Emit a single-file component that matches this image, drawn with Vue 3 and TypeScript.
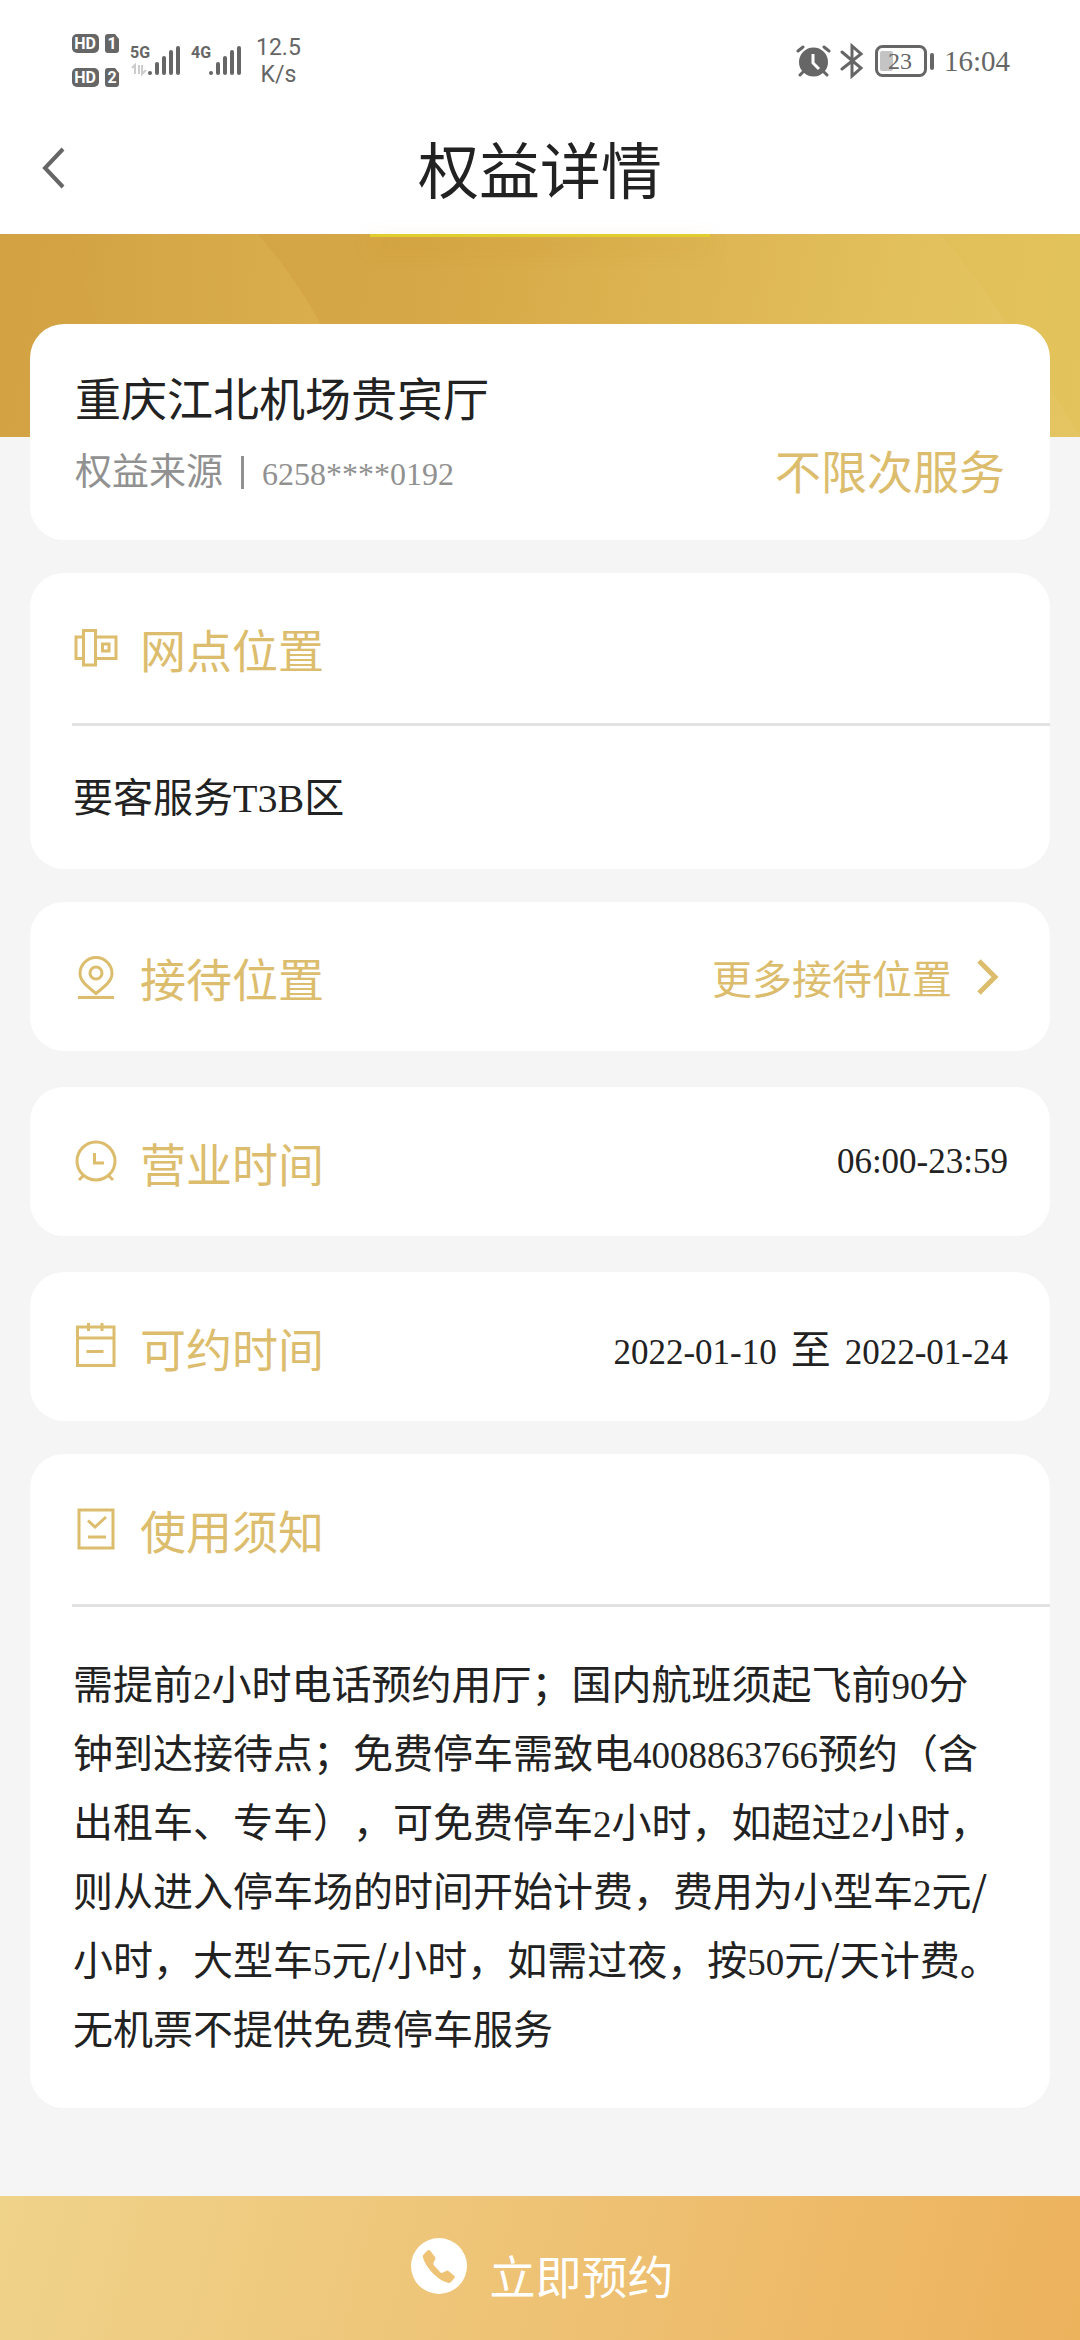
<script setup lang="ts">
type IconName = 'pin' | 'clock' | 'calendar'

interface InfoRow {
  icon: IconName
  title: string
  values?: string[]
  link?: string
}

const rows: InfoRow[] = [
  { icon: 'pin', title: '接待位置', link: '更多接待位置' },
  { icon: 'clock', title: '营业时间', values: ['06:00-23:59'] },
  { icon: 'calendar', title: '可约时间', values: ['2022-01-10', '至', '2022-01-24'] },
]

const signals = [
  { label: '5G', x: 60 },
  { label: '4G', x: 121 },
]
const bars = [
  { dx: 25, top: 30 },
  { dx: 32, top: 24 },
  { dx: 39, top: 18 },
  { dx: 46, top: 14 },
]

const notice =
  '需提前2小时电话预约用厅；国内航班须起飞前90分钟到达接待点；免费停车需致电4008863766预约（含出租车、专车），可免费停车2小时，如超过2小时，则从进入停车场的时间开始计费，费用为小型车2元/小时，大型车5元/小时，如需过夜，按50元/天计费。无机票不提供免费停车服务'

const isNumeric = (text: string) => /^[\d:-]+$/.test(text)

// Figures are set in their own face, so the notice is split around them.
const noticeParts = notice.split(/(\d+)/)
</script>

<template>
  <div class="page">
    <div class="status">
      <div class="status-group">
        <svg class="network" width="172" height="56" viewBox="0 0 172 56">
          <g v-for="n in 2" :key="n">
            <rect x="0" :y="n * 34 - 33" width="27" height="19" rx="5" />
            <text class="badge" x="13" :y="n * 34 - 18" text-anchor="middle">HD</text>
            <path :d="`M36 ${n * 34 - 33}h7l4 5v11q0 3-3 3h-8q-3 0-3-3v-13q0-3 3-3z`" />
            <text class="badge" x="40" :y="n * 34 - 18" text-anchor="middle">{{ n }}</text>
          </g>
          <g v-for="s in signals" :key="s.label">
            <text class="net" :x="s.x - 2" y="25">{{ s.label }}</text>
            <circle :cx="s.x + 18" cy="40" r="2" />
            <path
              v-for="b in bars"
              :key="b.dx"
              class="bar"
              :d="`M${s.x + b.dx} ${b.top + 1}V40`"
            />
          </g>
          <path class="arrows" d="M60 35l3-3v9M67 32v9M70 32v9l4-4" />
        </svg>
        <div class="speed"><span>12.5</span><span>K/s</span></div>
      </div>
      <div class="status-group right">
        <svg width="140" height="36" viewBox="0 0 140 36">
          <circle cx="17.5" cy="19" r="14.5" />
          <path class="line" d="M2 8l5-4M28 4l5 4M7 29l-3 3M28 29l3 3" />
          <path class="hand" d="M17 11v9l6 6" />
          <path class="line" d="M46 9l19 16-9 8V3l9 8-19 15" />
          <rect class="shell" x="80.500" y="3.500" width="49" height="29" rx="6" />
          <rect class="charge" x="84" y="8" width="13" height="20" rx="2" />
          <text class="level" x="104" y="26" text-anchor="middle">23</text>
          <rect x="134" y="10" width="4" height="17" rx="2" />
        </svg>
        <span class="time">16:04</span>
      </div>
    </div>

    <header class="nav">
      <button class="back" type="button" aria-label="返回">
        <svg width="26" height="42" viewBox="0 0 26 42">
          <path d="M22 2L4 21l18 19" />
        </svg>
      </button>
      <h1>权益详情</h1>
      <i class="progress"></i>
    </header>

    <div class="banner">
      <svg viewBox="0 0 1080 203" preserveAspectRatio="none">
        <defs>
          <linearGradient id="facet" x1="0" x2="1">
            <stop offset="0" stop-color="#e4c25c" stop-opacity="0" />
            <stop offset="1" stop-color="#e4c25c" stop-opacity=".3" />
          </linearGradient>
          <linearGradient id="edge" x1="0" x2="1">
            <stop offset="0" stop-color="#fff" stop-opacity="0" />
            <stop offset="1" stop-color="#fff" stop-opacity=".04" />
          </linearGradient>
        </defs>
        <path d="M70 0H258Q300 50 320 90L340 203H150Q90 90 70 0z" fill="url(#facet)" />
        <path d="M500 0H940Q1000 70 1080 203H560z" fill="url(#edge)" />
      </svg>
    </div>

    <main class="cards">
      <section class="card summary">
        <h2>重庆江北机场贵宾厅</h2>
        <div class="source">
          <span class="origin">权益来源<i class="divider"></i><span class="num">6258****0192</span></span>
          <strong>不限次服务</strong>
        </div>
      </section>

      <section class="card">
        <div class="head">
          <svg class="icon" viewBox="0 0 44 44">
            <path d="M9.500 4.500h12v34.500h-12zM9.500 11H2v21.500h7.500M21.500 11h20.500v21.500H21.500M28.500 18h6.500v7h-6.500z" />
          </svg>
          <h3>网点位置</h3>
        </div>
        <p class="body place">要客服务<span class="latin">T3B</span>区</p>
      </section>

      <div class="rows">
        <section v-for="row in rows" :key="row.title" class="card row">
          <svg class="icon" viewBox="0 0 44 44">
            <template v-if="row.icon === 'pin'">
              <path d="M22 38.500C16 33.500 6 27 6 18.500a16 16 0 0 1 32 0C38 27 28 33.500 22 38.500zM4 42.500h36" />
              <circle cx="22" cy="18" r="6" />
            </template>
            <template v-else-if="row.icon === 'clock'">
              <circle cx="22" cy="21" r="19" />
              <path d="M20.500 13v10H30M9 36l-4 4M35 36l4 4" />
            </template>
            <path v-else d="M3.500 2h36.500v38.500h-36.500zM3.500 13H40M14.500-2v8M28-2v8M12.500 26.500h17" />
          </svg>
          <h3>{{ row.title }}</h3>
          <a v-if="row.link" class="more" href="#">
            {{ row.link }}
            <svg width="24" height="36" viewBox="0 0 24 36"><path d="M3 2l16 16L3 34" /></svg>
          </a>
          <div v-else class="value">
            <span v-for="v in row.values" :key="v" :class="{ num: isNumeric(v) }">{{ v }}</span>
          </div>
        </section>
      </div>

      <section class="card">
        <div class="head">
          <svg class="icon" viewBox="0 0 44 44">
            <path d="M5 3h34v38H5zM14 13.500l7 6.500 11-10M14 30h18" />
          </svg>
          <h3>使用须知</h3>
        </div>
        <p class="body rules">
          <template v-for="(part, i) in noticeParts" :key="i"
            ><span v-if="isNumeric(part)" class="num">{{ part }}</span
            ><template v-else>{{ part }}</template></template
          >
        </p>
      </section>
    </main>

    <button class="book" type="button">
      <svg width="56" height="56" viewBox="0 0 56 56">
        <circle cx="28" cy="28" r="28" fill="#fff" />
        <path
          d="M12.500 16.500l4-4q1.500-1 2.500 0l5 6.500q1 1.500 0 3l-1.500 2.500q-.5 1.500.5 3l6 6.500q1.500 1.500 3 .5l3-1.500q1-1 2.500 0l5.500 4.500q1.500 1 .5 2.500l-3.500 4q-1.500 1.500-4 .5C26 41.500 14.500 29 12 19.500q-.5-2 .5-3z"
          fill="#eec375"
        />
      </svg>
      <span>立即预约</span>
    </button>
  </div>
</template>

<style>
body {
  background: #f5f5f5;
}
</style>

<style scoped>
.page {
  display: flex;
  flex-direction: column;
  min-height: 100vh;
  background: #f5f5f5;
  color: #222;
  font-family: "Noto Sans CJK SC", sans-serif;
  font-size: 40px;
  text-spacing-trim: space-all;
}
h1,
h2,
h3,
p {
  margin: 0;
  font-weight: 400;
}
button {
  border: 0;
  padding: 0;
  font: inherit;
  cursor: pointer;
}
.num,
.latin,
.level,
.time {
  font-family: "Liberation Serif", serif;
}
.num,
.latin {
  line-height: 1;
}
.num {
  font-size: 37px;
}

.status {
  display: flex;
  justify-content: space-between;
  align-items: center;
  height: 106px;
  padding: 16px 70px 0 72px;
  box-sizing: border-box;
  background: #fff;
  color: #666;
}
.status-group {
  display: flex;
  align-items: center;
  gap: 12px;
}
.right {
  gap: 8px;
}
.status svg {
  fill: #666;
}
.badge,
.net {
  font-family: Roboto, sans-serif;
  font-weight: 700;
}
.badge {
  font-size: 16px;
}
.net {
  font-size: 16px;
}
.bar {
  stroke: #666;
  stroke-width: 4;
  stroke-linecap: round;
}
.speed {
  display: flex;
  flex-direction: column;
  align-items: center;
  font-family: Roboto, sans-serif;
  font-size: 23px;
  line-height: 27px;
}
.line,
.shell {
  stroke: #666;
  stroke-width: 3;
  stroke-linecap: round;
}
.hand {
  stroke: #fff;
  stroke-width: 3;
}
.arrows {
  stroke: #ccc;
  stroke-width: 2;
}
.status .line,
.status .shell,
.status .hand,
.status .arrows {
  fill: none;
}
.status .charge {
  fill: #c4c4c4;
}
.status .badge {
  fill: #fff;
}
.level {
  font-size: 24px;
}
.time {
  font-size: 29px;
  line-height: 36px;
}

.nav {
  position: relative;
  display: flex;
  align-items: center;
  justify-content: center;
  height: 128px;
  padding-bottom: 4px;
  box-sizing: border-box;
  background: #fff;
}
.nav h1 {
  font-size: 61px;
  line-height: 80px;
}
.back {
  position: absolute;
  left: 41px;
  background: none;
  display: flex;
}
.back path {
  fill: none;
  stroke: #666;
  stroke-width: 4;
}
.progress {
  position: absolute;
  top: 100%;
  left: 50%;
  width: 340px;
  height: 3px;
  margin-left: -170px;
  background: #e0cd2e;
  box-shadow: 0 8px 20px rgba(190, 130, 30, 0.4);
}

.banner {
  height: 203px;
  background: linear-gradient(100deg, #d3a343 0%, #d6a746 38%, #dcb34f 60%, #e2c059 85%, #e3c35b 100%);
}
.banner svg {
  display: block;
  width: 100%;
  height: 100%;
}

.cards {
  position: relative;
  display: flex;
  flex-direction: column;
  gap: 33px;
  margin: -113px 30px 87px;
}
.card {
  background: #fff;
  border-radius: 34px;
}
.summary {
  padding: 41px 45px 29px;
}
.summary h2 {
  font-size: 46px;
  line-height: 62px;
}
.source {
  display: flex;
  justify-content: space-between;
  align-items: center;
  line-height: 84px;
}
.origin {
  color: #919191;
  font-size: 37px;
}
.origin .num {
  font-size: 32px;
}
.divider {
  display: inline-block;
  width: 3px;
  height: 33px;
  margin: 0 18px;
  background: #919191;
  vertical-align: -4px;
}
.source strong {
  color: #dcbd6e;
  font-size: 46px;
  font-weight: 400;
}

.head,
.row {
  display: flex;
  align-items: center;
}
.head {
  height: 150px;
  margin-left: 42px;
  border-bottom: 3px solid #e2e2e2;
}
.icon {
  flex: none;
  width: 44px;
  height: 44px;
  margin: 0 22px 0 2px;
  overflow: visible;
  fill: none;
  stroke: #dcbd6e;
  stroke-width: 3;
}
.row .icon {
  margin-left: 0;
}
h3 {
  color: #dcbd6e;
  font-size: 46px;
  line-height: 64px;
}
.body {
  line-height: 69px;
}
.place {
  padding: 35px 43px 39px;
}
.rules {
  padding: 41px 48px 46px 43px;
}

.rows {
  display: flex;
  flex-direction: column;
  gap: 36px;
}
.row {
  height: 149px;
  padding: 0 42px 0 44px;
  box-sizing: border-box;
}
.value,
.more {
  display: flex;
  margin-left: auto;
}
.value {
  align-items: baseline;
  gap: 14px;
}
.value .num {
  font-size: 35px;
}
.more {
  align-items: center;
  gap: 24px;
  padding-right: 8px;
  color: #dcbd6e;
  text-decoration: none;
}
.more path {
  fill: none;
  stroke: #dcbd6e;
  stroke-width: 5;
}

.book {
  display: flex;
  align-items: baseline;
  justify-content: center;
  gap: 23px;
  height: 144px;
  margin-top: auto;
  padding: 42px 0 0 4px;
  background: linear-gradient(105deg, #efd389 0%, #eec376 48%, #edb25c 100%);
  color: #fff;
  font-size: 46px;
  line-height: 64px;
}
</style>
